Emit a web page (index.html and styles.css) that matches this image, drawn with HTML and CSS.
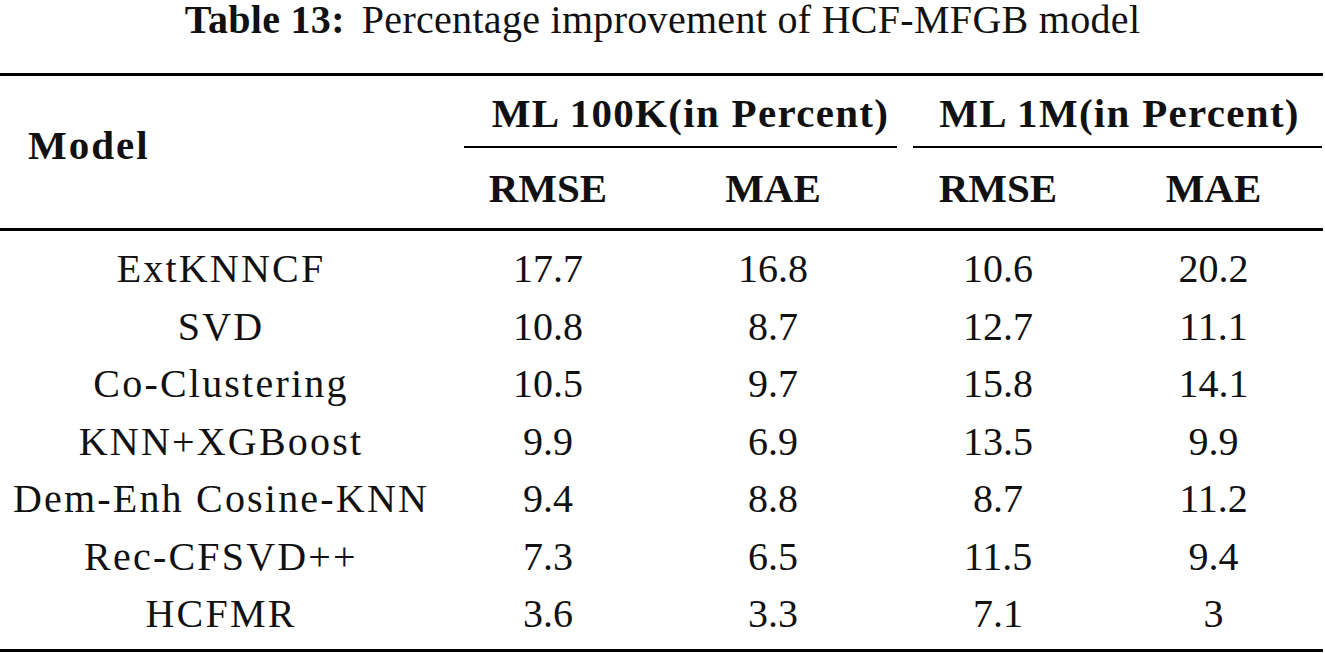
FILE: index.html
```html
<!DOCTYPE html>
<html lang="en">
<head>
<meta charset="utf-8">
<title>Table 13</title>
<link rel="stylesheet" href="styles.css">
</head>
<body>
<div class="page">
  <p class="caption"><b class="caption-label">Table 13:</b>Percentage improvement of HCF-MFGB model</p>
  <div class="table">
    <div class="head-model">Model</div>
    <div class="head-group g1"><span class="rule">ML 100K(in Percent)</span></div>
    <div class="head-group g2"><span class="rule">ML 1M(in Percent)</span></div>
    <div class="head-sub">RMSE</div>
    <div class="head-sub">MAE</div>
    <div class="head-sub">RMSE</div>
    <div class="head-sub">MAE</div>
    <div class="midrule"></div>

    <div class="cell name">ExtKNNCF</div><div class="cell">17.7</div><div class="cell">16.8</div><div class="cell">10.6</div><div class="cell">20.2</div>
    <div class="cell name">SVD</div><div class="cell">10.8</div><div class="cell">8.7</div><div class="cell">12.7</div><div class="cell">11.1</div>
    <div class="cell name">Co-Clustering</div><div class="cell">10.5</div><div class="cell">9.7</div><div class="cell">15.8</div><div class="cell">14.1</div>
    <div class="cell name">KNN+XGBoost</div><div class="cell">9.9</div><div class="cell">6.9</div><div class="cell">13.5</div><div class="cell">9.9</div>
    <div class="cell name">Dem-Enh Cosine-KNN</div><div class="cell">9.4</div><div class="cell">8.8</div><div class="cell">8.7</div><div class="cell">11.2</div>
    <div class="cell name">Rec-CFSVD++</div><div class="cell">7.3</div><div class="cell">6.5</div><div class="cell">11.5</div><div class="cell">9.4</div>
    <div class="cell name">HCFMR</div><div class="cell">3.6</div><div class="cell">3.3</div><div class="cell">7.1</div><div class="cell">3</div>
  </div>
</div>
</body>
</html>
```

FILE: styles.css
```css
html, body {
  margin: 0;
  padding: 0;
  background: #ffffff;
}

.page {
  width: 1325px;
  color: #111111;
  font-family: "Liberation Serif", "Times New Roman", serif;
}

.caption {
  margin: -2.5px 0 0 0;
  height: 44px;
  font-size: 40px;
  line-height: 44px;
  letter-spacing: 0.3px;
  text-align: center;
  white-space: nowrap;
}

.caption-label {
  font-weight: 700;
  margin-right: 17px;
}

.table {
  margin-top: 31.5px;
  width: 1323px;
  display: grid;
  grid-template-columns: 442px 212px 238px 212px 219px;
  grid-template-rows: 72px 80px 12px;
  grid-auto-rows: 57.5px;
  border-top: 3px solid #000;
  border-bottom: 3px solid #000;
  padding-bottom: 6px;
}

.head-model,
.head-group,
.head-sub {
  font-size: 41px;
  font-weight: 700;
  line-height: 46px;
  white-space: nowrap;
}

.head-model {
  grid-row: 1 / span 2;
  grid-column: 1;
  padding: 46px 0 0 28px;
  letter-spacing: 2px;
}

.head-group {
  grid-row: 1;
  padding: 14px 0 0 0;
  display: flex;
}

.head-group .rule {
  flex: 1;
  display: block;
  text-align: center;
  height: 56px;
  letter-spacing: 1.3px;
  border-bottom: 2px solid #000;
}

.g1 {
  grid-column: 2 / span 2;
  margin: 0 -5px 0 22px;
}

.g1 .rule {
  padding-left: 20px;
}

.g2 {
  grid-column: 4 / span 2;
  margin: 0 1px 0 21px;
}

.g2 .rule {
  padding-left: 4px;
}

.head-sub {
  grid-row: 2;
  text-align: center;
  padding-top: 17px;
}

.midrule {
  grid-column: 1 / -1;
  grid-row: 3;
  border-top: 3px solid #000;
}

.cell {
  font-size: 40px;
  line-height: 57.5px;
  text-align: center;
  white-space: nowrap;
}

.cell.name {
  grid-column: 1;
  letter-spacing: 2.2px;
}
```
